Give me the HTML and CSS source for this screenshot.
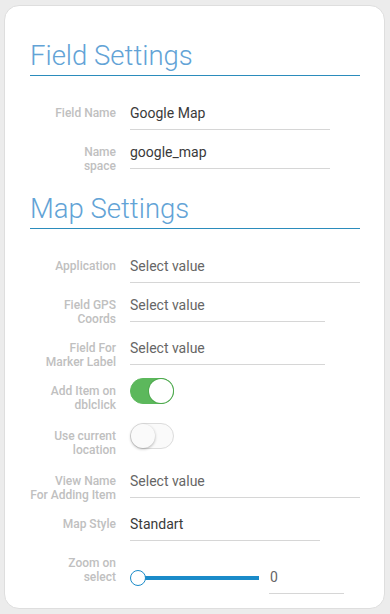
FILE: index.html
```html
<!DOCTYPE html>
<html lang="en">
<head>
    <meta charset="UTF-8">
    <meta name="viewport" content="width=device-width, initial-scale=1.0">
    <title>Field Settings</title>
    <link rel="stylesheet" href="styles.css">
</head>
<body>
    <div class="card">
        <h2 class="section-title">Field Settings</h2>

        <div class="row">
            <div class="label">Field Name</div>
            <div class="field w200"><span class="value">Google Map</span></div>
        </div>
        <div class="row">
            <div class="label">Name<br>space</div>
            <div class="field w200"><span class="value">google_map</span></div>
        </div>

        <h2 class="section-title second">Map Settings</h2>

        <div class="row">
            <div class="label">Application</div>
            <div class="field w230"><span class="placeholder">Select value</span></div>
        </div>
        <div class="row">
            <div class="label">Field GPS<br>Coords</div>
            <div class="field w195"><span class="placeholder">Select value</span></div>
        </div>
        <div class="row">
            <div class="label">Field For<br>Marker Label</div>
            <div class="field w195"><span class="placeholder">Select value</span></div>
        </div>
        <div class="row toggle-row">
            <div class="label">Add Item on<br>dblclick</div>
            <div class="toggle-box"><span class="toggle on"></span></div>
        </div>
        <div class="row toggle-row">
            <div class="label">Use current<br>location</div>
            <div class="toggle-box"><span class="toggle"></span></div>
        </div>
        <div class="row">
            <div class="label">View Name<br>For Adding Item</div>
            <div class="field w230"><span class="placeholder">Select value</span></div>
        </div>
        <div class="row">
            <div class="label">Map Style</div>
            <div class="field w190"><span class="value">Standart</span></div>
        </div>
        <div class="row last">
            <div class="label">Zoom on<br>select</div>
            <div class="slider-box">
                <div class="slider">
                    <span class="track"></span>
                    <span class="thumb"></span>
                </div>
                <div class="field w75"><span class="value light">0</span></div>
            </div>
        </div>
    </div>
</body>
</html>
```

FILE: styles.css
```css
body
{
    margin: 0;
    padding: 5px 5px 5px 4px;
    background-color: #ececec;
    font-family: Roboto, "Liberation Sans", sans-serif;
}
.card
{
    background-color: #fff;
    border: 1px solid #dedede;
    border-radius: 15px;
    padding: 33px 24px 14px 25px;
    height: 604px;
    box-sizing: border-box;
}
.section-title
{
    margin: 0 0 21px 0;
    padding: 0 0 2px 0;
    font-size: 27.5px;
    line-height: 34px;
    font-weight: 300;
    color: #62a3d6;
    border-bottom: 1px solid #2b8cbc;
}
.second
{
    margin-top: 19px;
}
.row
{
    display: flex;
    align-items: flex-start;
    margin-bottom: 6px;
}
.label
{
    width: 86px;
    flex: none;
    margin-right: 14px;
    padding-top: 9px;
    text-align: right;
    white-space: nowrap;
    font-size: 12px;
    line-height: 14px;
    font-weight: 500;
    color: #c0c0c0;
}
.field
{
    height: 32px;
    border-bottom: 1px solid #d6d6d6;
    display: flex;
    align-items: center;
    font-size: 14px;
}
.w200 { width: 200px; }
.w230 { width: 230px; }
.w195 { width: 195px; }
.w190 { width: 190px; }
.w75 { width: 75px; }
.value
{
    color: #3a3a3a;
}
.value.light
{
    color: #666;
    padding-left: 1px;
}
.placeholder
{
    color: #666;
}
.toggle-row
{
    margin-bottom: 8px;
}
.toggle-box
{
    padding-top: 3px;
}
.toggle
{
    display: block;
    position: relative;
    width: 44px;
    height: 26px;
    box-sizing: border-box;
    border-radius: 13px;
    border: 1px solid #dcdcdc;
    background-color: #fafafa;
}
.toggle::after
{
    content: "";
    position: absolute;
    top: 0;
    left: 0;
    width: 24px;
    height: 24px;
    border-radius: 50%;
    background-color: #fafafa;
    box-shadow: 0 1px 3px rgba(0, 0, 0, 0.3);
}
.toggle.on
{
    background-color: #5cb85c;
    border-color: #5cb85c;
}
.toggle.on::after
{
    left: 18px;
    background-color: #fff;
    box-shadow: 0 0 0 1px #4ea94e;
}
.slider-box
{
    display: flex;
    align-items: center;
    margin-top: 14px;
}
.slider
{
    position: relative;
    width: 129px;
    height: 32px;
    margin-right: 10px;
}
.track
{
    position: absolute;
    left: 6px;
    right: 0;
    top: 14px;
    height: 4px;
    background-color: #1a8bc9;
}
.thumb
{
    position: absolute;
    left: 0;
    top: 8px;
    width: 16px;
    height: 16px;
    box-sizing: border-box;
    border-radius: 50%;
    border: 1.5px solid #1a8bc9;
    background-color: #fff;
}
```
